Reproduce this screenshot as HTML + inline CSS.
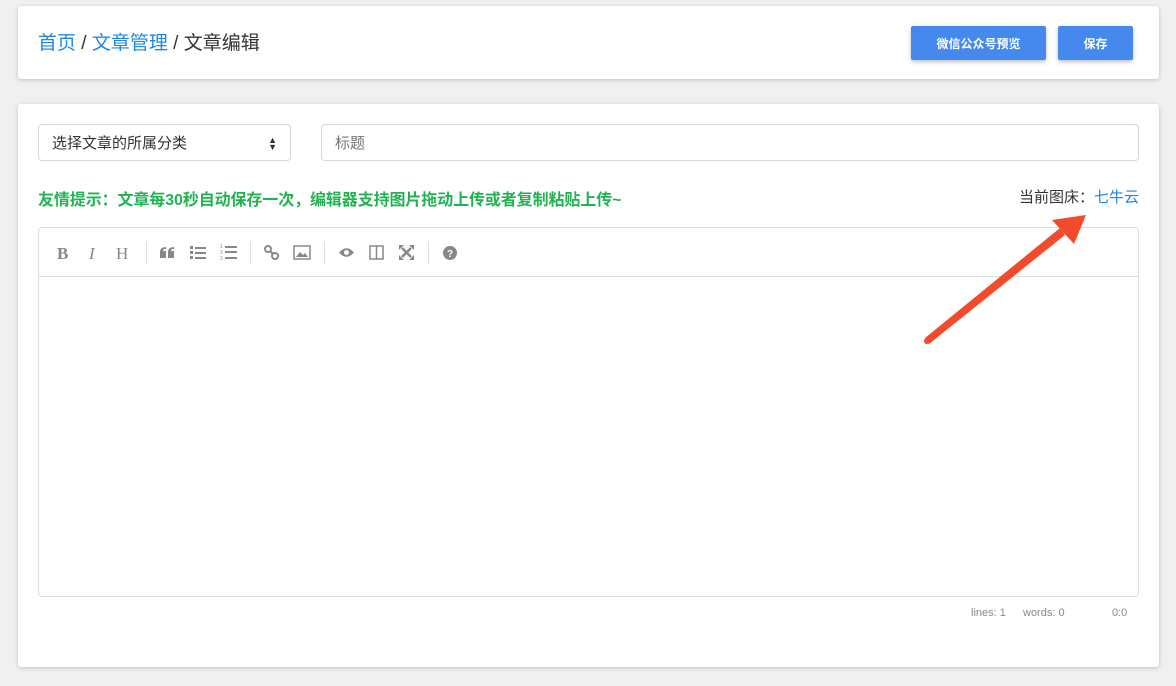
<!DOCTYPE html>
<html><head><meta charset="utf-8"><style>
*{box-sizing:border-box;margin:0;padding:0}
body{width:1176px;height:686px;background:#f0f0f0;font-family:"Liberation Sans","Noto Sans CJK SC",sans-serif;position:relative;overflow:hidden}
.card{position:absolute;background:#fff;border-radius:3px;box-shadow:0 1px 4px rgba(0,0,0,.2)}
.bc{position:absolute;left:38px;top:28px;font-size:19px;color:#333}
.bc a{color:#1e88e5}
.btn{position:absolute;top:26px;height:34px;background:#4589ee;color:#fff;font-size:12px;font-weight:bold;border-radius:2px;box-shadow:0 2px 4px rgba(0,0,0,.25);display:flex;align-items:center;justify-content:center}
.inp{position:absolute;top:124px;height:37px;border:1px solid #d6d6d6;border-radius:4px;font-size:15px;display:flex;align-items:center;padding-left:13px}
.tip{position:absolute;left:38px;top:186px;font-size:16px;color:#21b352;font-weight:bold;letter-spacing:-0.1px}
.cur{position:absolute;right:37px;top:186px;font-size:15px;color:#333}
.cur span{color:#1e88e5}
.ed{position:absolute;left:38px;top:227px;width:1101px;height:370px;border:1px solid #ddd;border-radius:4px}
.tb{height:49px;border-bottom:1px solid #ddd;position:relative}
.ic{position:absolute;top:16px;color:#888;font-size:17px}
.sep{position:absolute;top:14px;width:1px;height:22px;background:#ddd}
.st{position:absolute;top:607px;font-size:11px;color:#888}
</style></head><body>
<div class="card" style="left:18px;top:6px;width:1141px;height:73px"></div>
<div class="bc"><a>首页</a> / <a>文章管理</a> / 文章编辑</div>
<div class="btn" style="left:911px;width:135px">微信公众号预览</div>
<div class="btn" style="left:1058px;width:75px">保存</div>
<div class="card" style="left:18px;top:104px;width:1141px;height:563px"></div>
<div class="inp" style="left:38px;width:253px;color:#333">选择文章的所属分类<span style="position:absolute;right:13px;font-size:9px;line-height:7px;top:12px">▲<br>▼</span></div>
<div class="inp" style="left:321px;width:818px;color:#777">标题</div>
<div class="tip">友情提示：文章每30秒自动保存一次，编辑器支持图片拖动上传或者复制粘贴上传~</div>
<div class="cur">当前图床：<span>七牛云</span></div>
<div class="ed"><div class="tb">
<span class="ic" style="left:18px;font-family:'Liberation Serif';font-weight:bold">B</span>
<span class="ic" style="left:50px;font-family:'Liberation Serif';font-style:italic">I</span>
<span class="ic" style="left:77px;font-family:'Liberation Serif'">H</span>
<div class="sep" style="left:107px"></div>
<svg class="ic" style="left:121px;top:19px" width="15" height="11"><g fill="#888"><path d="M0 5Q0 0 6 0V2Q3 2 3 4H6V11H0Z"/><path d="M8 5Q8 0 14 0V2Q11 2 11 4H14V11H8Z"/></g></svg>
<svg class="ic" style="left:151px;top:17px" width="16" height="14"><g fill="#888"><rect x="0" y="1" width="3" height="3"/><rect x="0" y="6" width="3" height="3"/><rect x="0" y="11" width="3" height="3"/><rect x="5" y="2" width="11" height="2"/><rect x="5" y="7" width="11" height="2"/><rect x="5" y="12" width="11" height="2"/></g></svg>
<svg class="ic" style="left:181px;top:15px" width="17" height="17"><g fill="#888"><text x="0" y="5" font-size="5">1</text><text x="0" y="11" font-size="5">2</text><text x="0" y="17" font-size="5">3</text><rect x="5" y="3" width="12" height="2"/><rect x="5" y="8" width="12" height="2"/><rect x="5" y="14" width="12" height="2"/></g></svg>
<div class="sep" style="left:211px"></div>
<svg class="ic" style="left:225px;top:17px" width="15" height="15"><g fill="none" stroke="#888" stroke-width="2"><circle cx="4" cy="4" r="3"/><circle cx="11" cy="11" r="3"/><path d="M6 6L9 9"/></g></svg>
<svg class="ic" style="left:254px;top:17px" width="18" height="15"><rect x="1" y="1" width="16" height="13" fill="none" stroke="#888" stroke-width="1.5"/><path d="M3 12L7 7L10 10L12 8L15 12Z" fill="#888"/></svg>
<div class="sep" style="left:285px"></div>
<svg class="ic" style="left:299px;top:19px" width="17" height="11"><path d="M1 5.5Q8.5 -3 16 5.5Q8.5 14 1 5.5Z" fill="#888"/><circle cx="8.5" cy="5.5" r="2.5" fill="#fff"/></svg>
<svg class="ic" style="left:330px;top:17px" width="15" height="15"><rect x="1" y="1" width="13" height="13" fill="none" stroke="#888" stroke-width="1.5"/><path d="M7.5 1V14" stroke="#888" stroke-width="1.5"/></svg>
<svg class="ic" style="left:360px;top:17px" width="15" height="15"><g stroke="#888" stroke-width="2.5" fill="#888"><path d="M3 3L12 12M12 3L3 12"/></g><g fill="#888"><path d="M0 0H5L0 5Z M15 0H10L15 5Z M0 15H5L0 10Z M15 15H10L15 10Z"/></g></svg>
<div class="sep" style="left:389px"></div>
<svg class="ic" style="left:404px;top:18px" width="14" height="14"><circle cx="7" cy="7" r="7" fill="#888"/><text x="7" y="11" fill="#fff" font-size="10" font-weight="bold" text-anchor="middle" font-family="Liberation Sans">?</text></svg>
</div></div>
<div class="st" style="left:971px">lines: 1</div>
<div class="st" style="left:1023px">words: 0</div>
<div class="st" style="left:1112px">0:0</div>
<svg style="position:absolute;left:0;top:0" width="1176" height="686"><path d="M925 338L1060 228L1065 235L929 344Z" fill="#f24b2b"/><circle cx="927" cy="341" r="3" fill="#f24b2b"/><path d="M1086 215L1052 220L1074 244Z" fill="#f24b2b"/></svg>
</body></html>
